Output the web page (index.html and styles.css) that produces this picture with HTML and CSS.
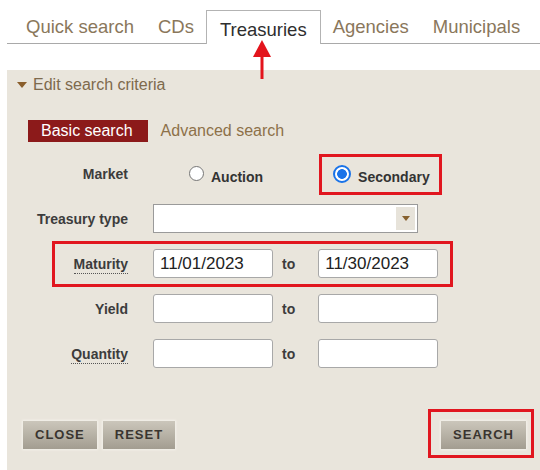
FILE: index.html
```html
<!DOCTYPE html>
<html>
<head>
<meta charset="utf-8">
<link rel="stylesheet" href="styles.css">
</head>
<body>
<div class="page">
  <div class="tabs">
    <span class="tab">Quick search</span>
    <span class="tab">CDs</span>
    <span class="tab active">Treasuries</span>
    <span class="tab">Agencies</span>
    <span class="tab">Municipals</span>
  </div>

  <div class="panel">
    <div class="toggle"><span class="caret"></span>Edit search criteria</div>
    <div class="modes">
      <span class="mode active">Basic search</span>
      <span class="mode">Advanced search</span>
    </div>

    <div class="form">
      <div class="row">
        <span class="lbl">Market</span>
        <div class="radios">
          <span class="opt"><span class="radio"></span><span class="opt-text">Auction</span></span>
          <span class="opt second"><span class="radio checked"></span><span class="opt-text">Secondary</span></span>
        </div>
      </div>
      <div class="row">
        <span class="lbl">Treasury type</span>
        <div class="select"><span class="sel-btn"><span class="sel-caret"></span></span></div>
      </div>
      <div class="row">
        <span class="lbl"><span class="dotted">Maturity</span></span>
        <div class="field">11/01/2023</div>
        <span class="to">to</span>
        <div class="field">11/30/2023</div>
      </div>
      <div class="row">
        <span class="lbl">Yield</span>
        <div class="field"></div>
        <span class="to">to</span>
        <div class="field"></div>
      </div>
      <div class="row">
        <span class="lbl"><span class="dotted">Quantity</span></span>
        <div class="field"></div>
        <span class="to">to</span>
        <div class="field"></div>
      </div>
    </div>

    <div class="actions">
      <div class="left-btns">
        <span class="btn">CLOSE</span>
        <span class="btn">RESET</span>
      </div>
      <span class="btn">SEARCH</span>
    </div>
  </div>

  <div class="mark mark-secondary"></div>
  <div class="mark mark-maturity"></div>
  <div class="mark mark-search"></div>
  <svg class="arrow" width="20" height="40" viewBox="0 0 20 40">
    <polygon points="10,0 19,17 1,17" fill="#e3141c"/>
    <rect x="8.5" y="15" width="3" height="24" fill="#e3141c"/>
  </svg>
</div>
</body>
</html>
```

FILE: styles.css
```css
html, body {
  margin: 0;
  padding: 0;
  background: #ffffff;
}

.page {
  position: relative;
  width: 540px;
  height: 470px;
  overflow: hidden;
  font-family: "Liberation Sans", Arial, sans-serif;
}

.tabs {
  display: flex;
  align-items: flex-end;
  margin-left: 7px;
  padding-top: 10px;
  padding-left: 7px;
  border-bottom: 1px solid #a9a9a9;
}

.tab {
  font-size: 18.5px;
  line-height: 20px;
  padding: 7px 12px 6px;
  color: #8a775b;
  white-space: nowrap;
}

.tab.active {
  color: #2e2e2e;
  background: #ffffff;
  border: 1px solid #b3b3b3;
  border-bottom: none;
  padding: 9px 13px 4px;
  margin-bottom: -1px;
}

.panel {
  margin: 26px 0 0 7px;
  height: 400px;
  background: #e9e5dc;
  display: flex;
  flex-direction: column;
  padding-left: 10px;
  box-sizing: border-box;
}

.toggle {
  display: flex;
  align-items: center;
  margin-top: 6px;
  font-size: 16px;
  line-height: 18px;
  color: #7e6a4d;
}

.caret {
  width: 0;
  height: 0;
  border-left: 5px solid transparent;
  border-right: 5px solid transparent;
  border-top: 6px solid #8a5e2c;
  margin-right: 6px;
}

.modes {
  display: flex;
  align-items: center;
  margin: 26px 0 0 11px;
}

.mode {
  font-size: 16px;
  line-height: 22px;
  color: #8d7149;
}

.mode.active {
  background: #8c1a1a;
  color: #ffffff;
  padding: 0 15px 0 13px;
  margin-right: 13px;
}

.form {
  display: flex;
  flex-direction: column;
  gap: 16px;
  margin: 17px 0 0 -10px;
}

.row {
  display: flex;
  align-items: center;
  height: 29px;
}

.lbl {
  width: 121px;
  text-align: right;
  margin-right: 25px;
  font-size: 14px;
  font-weight: bold;
  color: #3c3c3c;
}

.dotted {
  border-bottom: 1px dotted #555555;
  padding-bottom: 1px;
}

.radios {
  display: flex;
  align-items: center;
  padding-left: 36px;
}

.opt {
  display: flex;
  align-items: center;
}

.opt.second {
  margin-left: 70px;
}

.opt-text {
  margin-left: 7px;
  margin-top: 7px;
  font-size: 14px;
  font-weight: bold;
  color: #333333;
}

.radio {
  width: 13px;
  height: 13px;
  border: 1px solid #767676;
  border-radius: 50%;
  background: #ffffff;
}

.radio.checked {
  width: 14px;
  height: 14px;
  border: 2px solid #1a73e8;
  background: radial-gradient(circle, #1a73e8 0, #1a73e8 4.5px, #ffffff 5.2px);
}

.select {
  width: 265px;
  height: 29px;
  box-sizing: border-box;
  border: 1px solid #9a9a9a;
  background: #ffffff;
  display: flex;
  justify-content: flex-end;
  padding: 2px;
}

.sel-btn {
  width: 19px;
  background: #e7e3da;
  display: flex;
  align-items: center;
  justify-content: center;
}

.sel-caret {
  width: 0;
  height: 0;
  border-left: 4.5px solid transparent;
  border-right: 4.5px solid transparent;
  border-top: 5px solid #87612f;
}

.field {
  width: 120px;
  height: 29px;
  box-sizing: border-box;
  border: 1px solid #a8a8a8;
  border-radius: 3px;
  background: #ffffff;
  padding: 0 6px;
  font-size: 17px;
  line-height: 27px;
  color: #222222;
}

.to {
  margin: 0 23px 0 9px;
  font-size: 14px;
  font-weight: bold;
  color: #3c3c3c;
}

.actions {
  margin-top: auto;
  margin-left: -10px;
  display: flex;
  justify-content: space-between;
  align-items: center;
  padding: 0 14px 21px 16px;
}

.left-btns {
  display: flex;
  gap: 6px;
}

.btn {
  height: 28px;
  line-height: 28px;
  padding: 0 12px;
  font-size: 13px;
  font-weight: bold;
  letter-spacing: 1px;
  color: #3a3530;
  background: linear-gradient(#cbc6bb, #a39d91);
  box-shadow: 0 0 2px 1px #f4f1eb;
}

.mark {
  position: absolute;
  box-sizing: border-box;
  border: 3px solid #e1161f;
}

.mark-secondary {
  left: 319px;
  top: 154px;
  width: 123px;
  height: 41px;
}

.mark-maturity {
  left: 52px;
  top: 241px;
  width: 401px;
  height: 46px;
}

.mark-search {
  left: 428px;
  top: 409px;
  width: 106px;
  height: 49px;
}

.arrow {
  position: absolute;
  left: 252px;
  top: 40px;
}
```
